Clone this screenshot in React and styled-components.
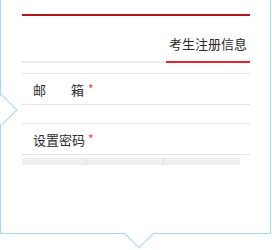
import React from "react";
import styled, { createGlobalStyle } from "styled-components";

const GlobalStyle = createGlobalStyle`
	html, body {
		margin: 0;
		padding: 0;
		background: #fff;
	}

	body {
		font-family: "Noto Sans CJK SC", "Noto Sans", sans-serif;
		color: #333;
	}
`;

const Page = styled.div`
	width: 272px;
	height: 250px;
	overflow: hidden;
`;

const Panel = styled.div`
	position: relative;
	box-sizing: border-box;
	width: 271px;
	height: 234px;
	padding: 14px 20px 0 21px;
	background: #fff;
	border-left: 1px solid #a3d8f3;
	border-right: 1px solid #a3d8f3;
	border-bottom: 1px solid #a3d8f3;
`;

const Pointer = styled.span`
	position: absolute;
	z-index: 2;
	width: 22px;
	height: 22px;
	box-sizing: border-box;
	background: #fff;
	transform: rotate(45deg);
`;

const PointerLeft = styled(Pointer)`
	left: -10px;
	top: 99px;
	border-top: 1px solid #a3d8f3;
	border-right: 1px solid #a3d8f3;
`;

const PointerDown = styled(Pointer)`
	left: 127px;
	top: 222px;
	border-right: 1px solid #a3d8f3;
	border-bottom: 1px solid #a3d8f3;
`;

const TopBar = styled.div`
	height: 2px;
	background: #b2161d;
`;

const Tabs = styled.div`
	display: flex;
	justify-content: flex-end;
	border-bottom: 2px solid #ededed;
`;

const Tab = styled.div`
	margin-bottom: -2px;
	padding: 18px 3px 8px;
	font-size: 13px;
	line-height: 19px;
	color: #2b2b2b;
	border-bottom: 2px solid ${(p) => (p.$active ? "#e3262d" : "transparent")};
`;

const Form = styled.div`
	margin-top: 10px;
	border-top: 1px solid #e6e6e6;
`;

const Row = styled.div`
	display: flex;
	align-items: center;
	height: ${(p) => p.$h}px;
	padding-left: 11px;
	border-bottom: 1px solid #e6e6e6;
	font-size: 13px;
	color: #2b2b2b;
`;

const Label = styled.span`
	display: inline-block;
	width: 51px;
	text-align: justify;
	text-align-last: justify;
	white-space: nowrap;
`;

const Star = styled.span`
	margin-left: 4px;
	margin-top: -2px;
	color: #ee3b3b;
	font-size: 12px;
`;

const Strength = styled.div`
	display: flex;
	margin-top: 3px;
	width: 218px;
	height: 7px;
`;

const Seg = styled.div`
	width: ${(p) => p.$w}px;
	height: 100%;
	background: #efefef;
	border-right: 1px solid #dcdcdc;

	&:last-child {
		border-right: none;
	}
`;

export default function App() {
	return (
		<Page>
			<GlobalStyle />
			<Panel>
				<PointerLeft />
				<TopBar />
				<Tabs>
					<Tab $active>考生注册信息</Tab>
				</Tabs>
				<Form>
					<Row $h={30}>
						<Label>邮箱</Label>
						<Star>*</Star>
					</Row>
					<Row $h={18} />
					<Row $h={30}>
						<Label>设置密码</Label>
						<Star>*</Star>
					</Row>
				</Form>
				<Strength>
					<Seg $w={64} />
					<Seg $w={76} />
					<Seg $w={76} />
				</Strength>
				<PointerDown />
			</Panel>
		</Page>
	);
}
